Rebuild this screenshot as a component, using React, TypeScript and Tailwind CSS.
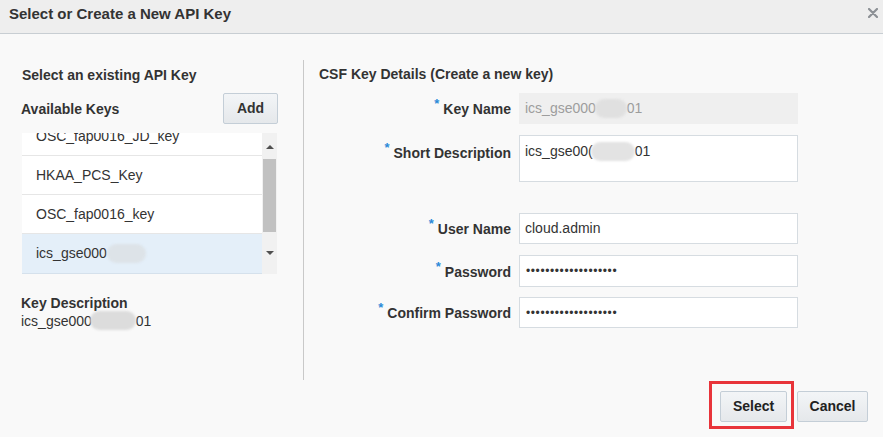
import React from "react";

const Blob = ({ w, cls }: { w: number; cls: string }) => (
  <span
    className={`inline-block h-[19px] rounded-full ${cls} blur-[1px]`}
    style={{ width: w }}
  />
);

const Star = () => (
  <span className="text-[13px] text-[#2b8ad8] font-bold relative top-[-6px] mr-[4px]">*</span>
);

const Dots = () => (
  <span className="text-[12px] tracking-[0.6px] text-[#333]">{"•".repeat(19)}</span>
);

export default function App() {
  return (
    <div
      className="w-[883px] h-[437px] bg-[#f9f9f9] flex flex-col text-[#333] overflow-hidden"
      style={{ fontFamily: '"Liberation Sans", Arial, sans-serif' }}
    >
      {/* Header */}
      <div className="h-[34px] shrink-0 bg-[#eeeeee] border-b border-[#c8ced3] flex items-center justify-between pl-[9px] pr-[5px]">
        <div className="text-[15px] font-bold text-[#333] leading-[18px] -mt-[6px]">
          Select or Create a New API Key
        </div>
        <svg width="10" height="10" viewBox="0 0 10 10" className="-mt-[7px]">
          <path d="M1 1L9 9M9 1L1 9" stroke="#8c9095" strokeWidth="2.2" strokeLinecap="round" />
        </svg>
      </div>

      {/* Body */}
      <div className="flex h-[346px] shrink-0">
        {/* Left column */}
        <div className="w-[303px] shrink-0 pl-[22px] pt-[33px]">
          <div className="text-[14px] font-bold leading-[16px]">Select an existing API Key</div>
          <div className="mt-[10px] w-[257px] flex items-center justify-between">
            <div className="text-[14px] font-bold leading-[16px] -ml-[1px]">Available Keys</div>
            <button className="w-[55px] h-[31px] border border-[#c4ced7] rounded-[2px] bg-gradient-to-b from-[#f3f5f7] to-[#e5e8eb] text-[14px] font-bold text-[#333] mr-[1px]">
              Add
            </button>
          </div>
          {/* List */}
          <div className="mt-[9px] w-[257px] h-[141px] flex overflow-hidden">
            <div className="flex-1 flex flex-col bg-white">
              <div className="h-[23px] overflow-hidden border-b border-[#e6e6e6] shrink-0">
                <div className="h-[39px] -mt-[16px] flex items-center pl-[14px] text-[14px] text-[#333]">
                  OSC_fap0016_JD_key
                </div>
              </div>
              <div className="h-[39px] shrink-0 flex items-center pl-[14px] text-[14px] border-b border-[#e6e6e6]">
                HKAA_PCS_Key
              </div>
              <div className="h-[39px] shrink-0 flex items-center pl-[14px] text-[14px] border-b border-[#e6e6e6]">
                OSC_fap0016_key
              </div>
              <div className="h-[40px] shrink-0 flex items-center pl-[14px] text-[14px] bg-[#e4eff9] border-b border-[#d5e1ec]">
                ics_gse000
                <Blob w={39} cls="bg-[#dde3e8]" />
              </div>
            </div>
            <div className="w-[15px] shrink-0 bg-[#f1f1f1] flex flex-col items-center mr-[2px]">
              <div className="h-[26px] flex items-center justify-center">
                <svg width="8" height="5" viewBox="0 0 8 5">
                  <path d="M0 5L4 1L8 5Z" fill="#505050" />
                </svg>
              </div>
              <div className="w-[13px] h-[73px] bg-[#c1c1c1]" />
              <div className="flex-1 flex items-center justify-center">
                <svg width="8" height="5" viewBox="0 0 8 5">
                  <path d="M0 0L4 4L8 0Z" fill="#505050" />
                </svg>
              </div>
            </div>
          </div>
          <div className="mt-[21px] text-[14px] font-bold leading-[16px] -ml-[1px]">Key Description</div>
          <div className="text-[14px] leading-[16px] flex items-center -ml-[1px]">
            ics_gse000
            <Blob w={46} cls="bg-[#dcdcdc] -ml-[2px]" />
            01
          </div>
        </div>

        {/* Right column */}
        <div className="flex-1 mt-[26px] border-l border-[#c9c9c9] pl-[15px] pt-[6px]">
          <div className="text-[14px] font-bold leading-[16px]">CSF Key Details (Create a new key)</div>
          <div className="mt-[11px] flex flex-col">
            <div className="flex items-center h-[31px]">
              <div className="w-[192px] text-right text-[14px] font-bold pt-[2px]">
                <Star />Key Name
              </div>
              <div className="ml-[8px] w-[279px] h-[31px] bg-[#efefef] flex items-center pl-[6px] text-[14px] text-[#9d9d9d]">
                ics_gse000
                <Blob w={32} cls="bg-[#e0e0e0] -ml-[1px]" />
                01
              </div>
            </div>
            <div className="flex items-start h-[47px] mt-[11px]">
              <div className="w-[192px] text-right text-[14px] font-bold pt-[8px]">
                <Star />Short Description
              </div>
              <div className="ml-[8px] w-[279px] h-[47px] bg-white border border-[#d6dce1] flex items-start pt-[7px] pl-[5px] text-[14px] leading-[16px]">
                ics_gse00(
                <Blob w={44} cls="bg-[#e3e3e3] -ml-[2px] -mt-[1px]" />
                01
              </div>
            </div>
            <div className="flex items-center h-[31px] mt-[31px]">
              <div className="w-[192px] text-right text-[14px] font-bold pt-[2px]">
                <Star />User Name
              </div>
              <div className="ml-[8px] w-[279px] h-[31px] bg-white border border-[#d6dce1] flex items-center pl-[5px] text-[14px]">
                cloud.admin
              </div>
            </div>
            <div className="flex items-center h-[32px] mt-[11px]">
              <div className="w-[192px] text-right text-[14px] font-bold pt-[2px]">
                <Star />Password
              </div>
              <div className="ml-[8px] w-[279px] h-[32px] bg-white border border-[#d6dce1] flex items-center pl-[6px]">
                <Dots />
              </div>
            </div>
            <div className="flex items-center h-[31px] mt-[10px]">
              <div className="w-[192px] text-right text-[14px] font-bold pt-[2px]">
                <Star />Confirm Password
              </div>
              <div className="ml-[8px] w-[279px] h-[31px] bg-white border border-[#d6dce1] flex items-center pl-[6px]">
                <Dots />
              </div>
            </div>
          </div>
        </div>
      </div>

      {/* Footer */}
      <div className="flex justify-end gap-[10px] pt-[11px] pr-[15px]">
        <div className="relative">
          <button className="w-[67px] h-[31px] border border-[#c4ced7] rounded-[2px] bg-gradient-to-b from-[#f3f5f7] to-[#e5e8eb] text-[14px] font-bold text-[#222]">
            Select
          </button>
          <div className="absolute left-[-11px] top-[-10px] right-[-7px] bottom-[-7px] border-[3px] border-[#e8343a] pointer-events-none" />
        </div>
        <button className="w-[71px] h-[31px] border border-[#c4ced7] rounded-[2px] bg-gradient-to-b from-[#f3f5f7] to-[#e5e8eb] text-[14px] font-bold text-[#222]">
          Cancel
        </button>
      </div>
    </div>
  );
}
